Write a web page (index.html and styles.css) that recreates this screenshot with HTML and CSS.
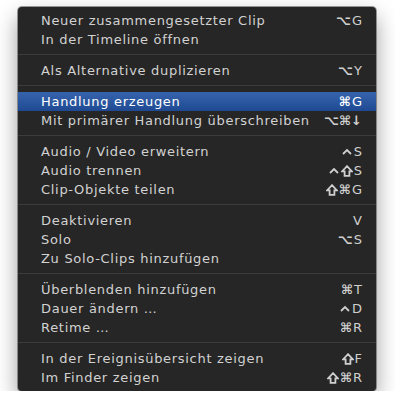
FILE: index.html
```html
<!DOCTYPE html>
<html lang="de">

<head>
    <meta charset="UTF-8">
    <title>Kontextmenü</title>
    <link rel="stylesheet" href="styles.css">
</head>

<body>
    <div class="menu">
        <div class="item"><span>Neuer zusammengesetzter Clip</span><span class="key"><b>⌥</b>G</span></div>
        <div class="item"><span>In der Timeline öffnen</span></div>
        <div class="sep"></div>
        <div class="item"><span>Als Alternative duplizieren</span><span class="key"><b>⌥</b>Y</span></div>
        <div class="sep"></div>
        <div class="item active"><span>Handlung erzeugen</span><span class="key"><b>⌘</b>G</span></div>
        <div class="item"><span>Mit primärer Handlung überschreiben</span><span class="key"><b>⌥⌘↓</b></span></div>
        <div class="sep"></div>
        <div class="item"><span>Audio / Video erweitern</span><span class="key"><svg class="ico" viewBox="0 0 12 12"><polyline points="2,8 6,4 10,8" /></svg>S</span></div>
        <div class="item"><span>Audio trennen</span><span class="key"><svg class="ico" viewBox="0 0 12 12"><polyline points="2,8 6,4 10,8" /></svg><svg class="ico" viewBox="0 0 12 12"><path d="M6 1.2 L11 6.4 H8.4 V10.8 H3.6 V6.4 H1 Z" /></svg>S</span></div>
        <div class="item"><span>Clip-Objekte teilen</span><span class="key"><svg class="ico" viewBox="0 0 12 12"><path d="M6 1.2 L11 6.4 H8.4 V10.8 H3.6 V6.4 H1 Z" /></svg><b>⌘</b>G</span></div>
        <div class="sep"></div>
        <div class="item"><span>Deaktivieren</span><span class="key">V</span></div>
        <div class="item"><span>Solo</span><span class="key"><b>⌥</b>S</span></div>
        <div class="item"><span>Zu Solo-Clips hinzufügen</span></div>
        <div class="sep"></div>
        <div class="item"><span>Überblenden hinzufügen</span><span class="key"><b>⌘</b>T</span></div>
        <div class="item"><span>Dauer ändern …</span><span class="key"><svg class="ico" viewBox="0 0 12 12"><polyline points="2,8 6,4 10,8" /></svg>D</span></div>
        <div class="item"><span>Retime …</span><span class="key"><b>⌘</b>R</span></div>
        <div class="sep"></div>
        <div class="item"><span>In der Ereignisübersicht zeigen</span><span class="key"><svg class="ico" viewBox="0 0 12 12"><path d="M6 1.2 L11 6.4 H8.4 V10.8 H3.6 V6.4 H1 Z" /></svg>F</span></div>
        <div class="item"><span>Im Finder zeigen</span><span class="key"><svg class="ico" viewBox="0 0 12 12"><path d="M6 1.2 L11 6.4 H8.4 V10.8 H3.6 V6.4 H1 Z" /></svg><b>⌘</b>R</span></div>
    </div>
</body>

</html>
```

FILE: styles.css
```css
/* Seite */
body {
    margin: 0;
    background-color: #fff;
    font-family: "DejaVu Sans", sans-serif;
}

/* Menü */
.menu {
    width: 358px;
    margin: 7px 0 0 18px;
    padding: 4px 0;
    box-sizing: border-box;
    background-color: #262626;
    border-radius: 4px;
    box-shadow: 0 0 0 1px rgba(90, 90, 90, 0.6), 0 10px 22px rgba(0, 0, 0, 0.4);
}

.item {
    display: flex;
    justify-content: space-between;
    align-items: center;
    height: 19px;
    padding: 0 14px 0 23px;
    color: #d2d2d2;
    font-size: 13px;
    letter-spacing: 0.7px;
}

.item .key {
    display: flex;
    align-items: center;
    gap: 1px;
    color: #cfcfcf;
    letter-spacing: 0;
}

.key b {
    font-weight: bold;
}

.ico {
    width: 12px;
    height: 12px;
    fill: none;
    stroke: currentColor;
    stroke-width: 1.8;
    stroke-linejoin: miter;
}

/* markierte Zeile */
.item.active {
    background: linear-gradient(to bottom, #3664ac, #1f4a93);
    color: #fff;
}

.item.active .key {
    color: #fff;
}

.sep {
    height: 1px;
    margin: 5px 0 6px;
    background-color: #3c3c3c;
}
```
